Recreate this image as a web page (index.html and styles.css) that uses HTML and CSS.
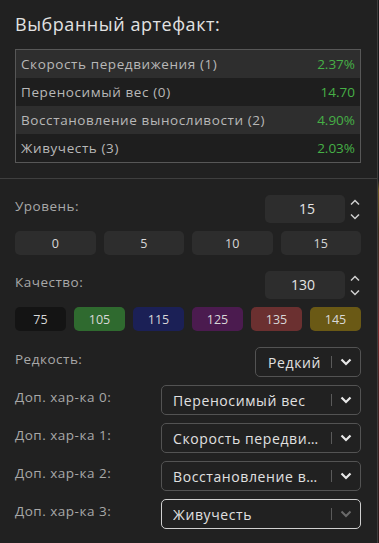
FILE: index.html
```html
<!DOCTYPE html>
<html lang="ru">
<head>
<meta charset="utf-8">
<link rel="stylesheet" href="styles.css">
</head>
<body>
<div class="page">
  <main class="panel">
    <section class="summary">
      <h1 class="title">Выбранный артефакт:</h1>
      <div class="stats">
        <div class="stat odd"><span>Скорость передвижения (1)</span><span class="val">2.37%</span></div>
        <div class="stat"><span>Переносимый вес (0)</span><span class="val">14.70</span></div>
        <div class="stat odd"><span>Восстановление выносливости (2)</span><span class="val">4.90%</span></div>
        <div class="stat"><span>Живучесть (3)</span><span class="val">2.03%</span></div>
      </div>
    </section>
    <section class="controls">
      <div class="num-row">
        <span class="label">Уровень:</span>
        <div class="num-wrap">
          <div class="num-input">15</div>
          <div class="spin">
            <svg width="12" height="7" viewBox="0 0 12 7"><path d="M2 5.5 L6 1.5 L10 5.5" fill="none" stroke="#d0d0d0" stroke-width="1.5"/></svg>
            <svg width="12" height="7" viewBox="0 0 12 7"><path d="M2 1.5 L6 5.5 L10 1.5" fill="none" stroke="#d0d0d0" stroke-width="1.5"/></svg>
          </div>
        </div>
      </div>
      <div class="btns four">
        <button class="chip">0</button>
        <button class="chip">5</button>
        <button class="chip">10</button>
        <button class="chip">15</button>
      </div>
      <div class="num-row">
        <span class="label">Качество:</span>
        <div class="num-wrap">
          <div class="num-input">130</div>
          <div class="spin">
            <svg width="12" height="7" viewBox="0 0 12 7"><path d="M2 5.5 L6 1.5 L10 5.5" fill="none" stroke="#d0d0d0" stroke-width="1.5"/></svg>
            <svg width="12" height="7" viewBox="0 0 12 7"><path d="M2 1.5 L6 5.5 L10 1.5" fill="none" stroke="#d0d0d0" stroke-width="1.5"/></svg>
          </div>
        </div>
      </div>
      <div class="btns six">
        <button class="chip q75">75</button>
        <button class="chip q105">105</button>
        <button class="chip q115">115</button>
        <button class="chip q125">125</button>
        <button class="chip q135">135</button>
        <button class="chip q145">145</button>
      </div>
      <div class="sel-row">
        <span class="label">Редкость:</span>
        <div class="select small"><span class="sel-text">Редкий</span><span class="sep"></span><svg class="chev" width="12" height="8" viewBox="0 0 12 8"><path d="M1.5 1.5 L6 6 L10.5 1.5" fill="none" stroke="#e8e8e8" stroke-width="2.2"/></svg></div>
      </div>
      <div class="sel-row">
        <span class="label">Доп. хар-ка 0:</span>
        <div class="select"><span class="sel-text">Переносимый вес</span><span class="sep"></span><svg class="chev" width="12" height="8" viewBox="0 0 12 8"><path d="M1.5 1.5 L6 6 L10.5 1.5" fill="none" stroke="#e8e8e8" stroke-width="2.2"/></svg></div>
      </div>
      <div class="sel-row">
        <span class="label">Доп. хар-ка 1:</span>
        <div class="select"><span class="sel-text">Скорость передвижения</span><span class="sep"></span><svg class="chev" width="12" height="8" viewBox="0 0 12 8"><path d="M1.5 1.5 L6 6 L10.5 1.5" fill="none" stroke="#e8e8e8" stroke-width="2.2"/></svg></div>
      </div>
      <div class="sel-row">
        <span class="label">Доп. хар-ка 2:</span>
        <div class="select"><span class="sel-text">Восстановление выносливости</span><span class="sep"></span><svg class="chev" width="12" height="8" viewBox="0 0 12 8"><path d="M1.5 1.5 L6 6 L10.5 1.5" fill="none" stroke="#e8e8e8" stroke-width="2.2"/></svg></div>
      </div>
      <div class="sel-row">
        <span class="label">Доп. хар-ка 3:</span>
        <div class="select focus"><span class="sel-text">Живучесть</span><span class="sep"></span><svg class="chev" width="12" height="8" viewBox="0 0 12 8"><path d="M1.5 1.5 L6 6 L10.5 1.5" fill="none" stroke="#6a6a6a" stroke-width="2"/></svg></div>
      </div>
    </section>
  </main>
  <div class="edge"></div>
</div>
</body>
</html>
```

FILE: styles.css
```css
* { box-sizing: border-box; }
html, body { margin: 0; padding: 0; }
body {
  background: #202020;
  font-family: "Open Sans", "Noto Sans", sans-serif;
  color: #d8d8d8;
  width: 379px;
  height: 543px;
  overflow: hidden;
}
.page {
  display: flex;
  height: 543px;
}
.panel {
  width: 378px;
  border-right: 1px solid #3d3d3d;
  background: #212121;
}
.edge {
  width: 1px;
  background: linear-gradient(#1a1a1a 0, #1a1a1a 180px, #6a5520 190px, #3a2a1a 230px, #5a3030 300px, #7a2828 330px, #4a2222 380px, #2a1a1a 543px);
}
.summary {
  padding: 12px 16px 16px 15px;
  border-bottom: 1px solid #3f3f3f;
  height: 179px;
}
.title {
  margin: 0 0 12px;
  font-size: 18px;
  font-weight: 400;
  line-height: 25px;
  color: #e2e2e2;
  letter-spacing: 0.55px;
}
.stats {
  border: 1px solid #575757;
}
.stat {
  display: flex;
  justify-content: space-between;
  align-items: center;
  height: 28px;
  padding: 0 5px 0 5px;
  font-size: 13.5px;
  letter-spacing: 0.6px;
  color: #b8b8b8;
  background: #1e1e1e;
}
.stat.odd { background: #2e2e2e; }
.val { color: #46b046; letter-spacing: 0; }

.controls {
  padding: 16px 16px 0 15px;
}
.label {
  font-size: 13.5px;
  color: #a8a8a8;
  line-height: 18px;
  letter-spacing: 0.5px;
}
.num-row {
  display: flex;
  justify-content: space-between;
  align-items: flex-start;
}
.num-row .label { padding-top: 2px; }
.num-wrap {
  display: flex;
  align-items: center;
  gap: 3px;
}
.num-input {
  width: 80px;
  height: 28px;
  background: #2d2d2d;
  border-radius: 5px;
  font-size: 14px;
  color: #e4e4e4;
  line-height: 28px;
  text-align: right;
  padding-right: 30px;
}
.spin {
  width: 13px;
  display: flex;
  flex-direction: column;
  gap: 7px;
  align-items: center;
}
.spin svg { display: block; }
.btns {
  display: grid;
  gap: 8px;
  margin: 8px 0 16px;
}
.btns.four { grid-template-columns: repeat(4, 1fr); }
.btns.six { grid-template-columns: repeat(6, 1fr); }
.chip {
  height: 24px;
  border: none;
  border-radius: 5px;
  background: #2d2d2d;
  color: #d8d8d8;
  font-family: inherit;
  font-size: 12.5px;
  padding: 0;
}
.q75 { background: #141414; }
.q105 { background: #2f6a2f; }
.q115 { background: #1b2056; }
.q125 { background: #4b1b4f; }
.q135 { background: #6b3030; }
.q145 { background: #6a5915; }

.sel-row {
  display: flex;
  justify-content: space-between;
  align-items: flex-start;
  margin-bottom: 8px;
}
.sel-row .label { padding-top: 3px; }
.select {
  width: 200px;
  height: 30px;
  border: 1px solid #535353;
  border-radius: 5px;
  display: flex;
  align-items: center;
  padding: 0 8px 0 11px;
  font-size: 14px;
  letter-spacing: 0.6px;
  color: #e0e0e0;
}
.select.small { width: 106px; }
.select.focus { border-color: #d0d0d0; }
.sel-text {
  flex: 1;
  white-space: nowrap;
  overflow: hidden;
  text-overflow: ellipsis;
  min-width: 0;
}
.select.small .sel-text { text-align: right; }
.sep {
  width: 1px;
  height: 12px;
  background: #5a5a5a;
  margin: 0 8px 0 10px;
}
.chev { display: block; flex: none; }
```
